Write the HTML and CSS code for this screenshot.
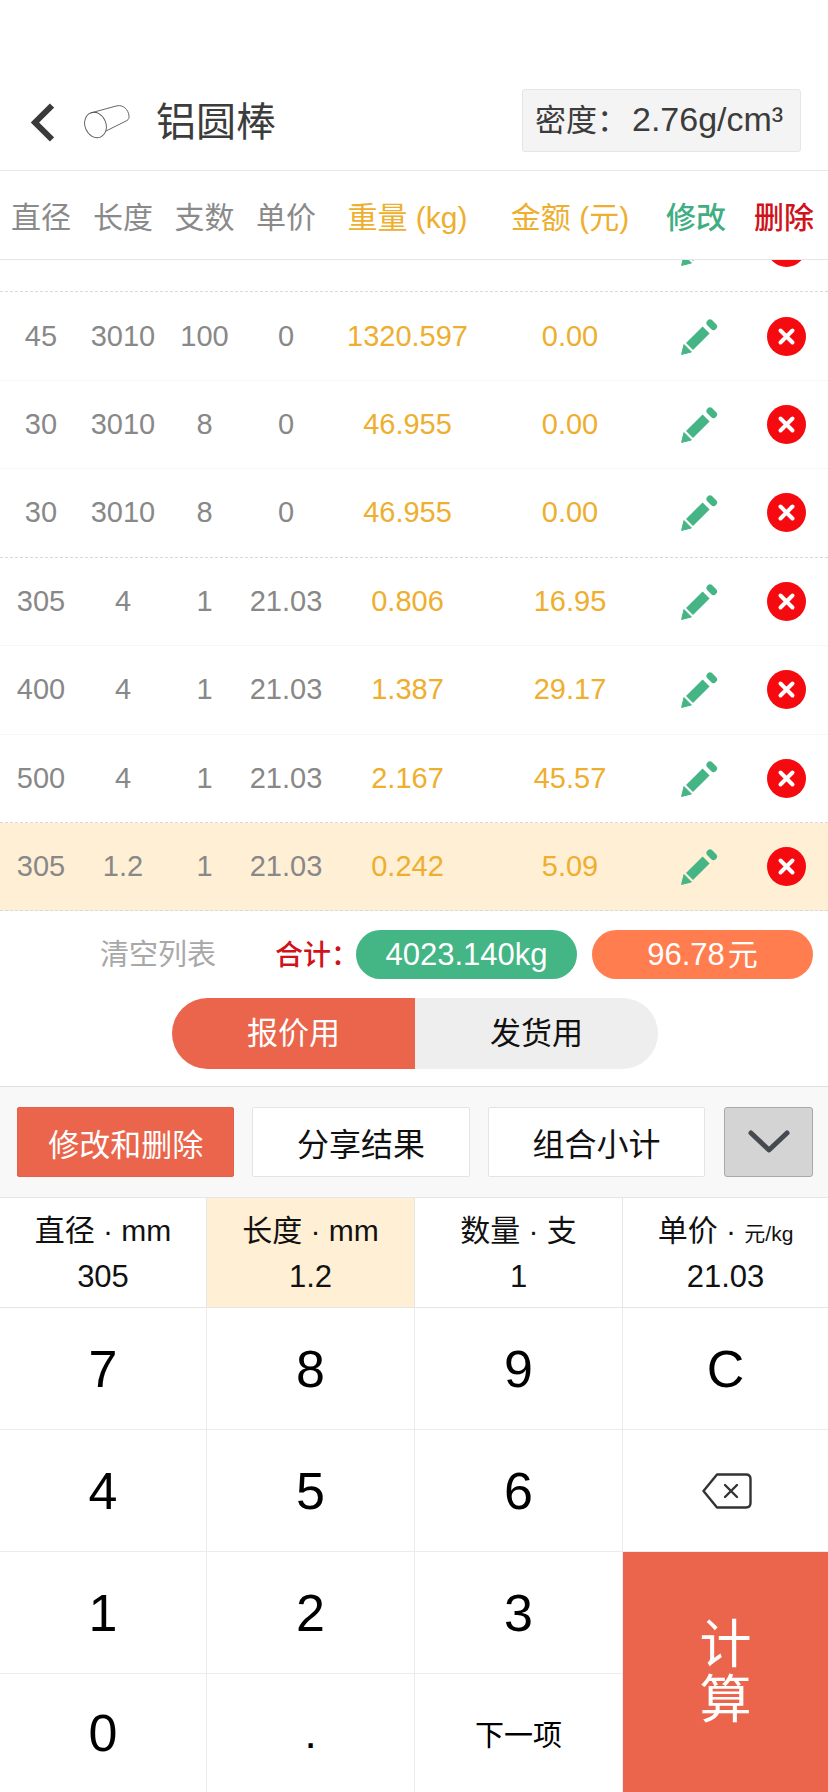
FILE: index.html
```html
<!DOCTYPE html>
<html lang="zh-CN">
<head>
<meta charset="utf-8">
<title>铝圆棒</title>
<link rel="stylesheet" href="styles.css">
</head>
<body>
<svg class="defs" width="0" height="0" aria-hidden="true">
  <defs>
    <symbol id="pencil" viewBox="0 0 37 37">
      <path d="M0.6 36.4 L3 26.6 L10.4 34 Z" fill="#46b586" stroke="#46b586" stroke-width="1" stroke-linejoin="round"/>
      <path d="M5 25 L21.6 8.4 L28.6 15.4 L12 32 Z" fill="#46b586"/>
      <path d="M29 5 L32.5 8.5" stroke="#46b586" stroke-width="7" stroke-linecap="round"/>
    </symbol>
    <symbol id="del" viewBox="0 0 39 39">
      <circle cx="19.5" cy="19.5" r="19.5" fill="#f40a0f"/>
      <path d="M13.5 13.5 L25.5 25.5 M25.5 13.5 L13.5 25.5" stroke="#fff" stroke-width="4" stroke-linecap="round"/>
    </symbol>
  </defs>
</svg>

<header class="topbar">
  <svg class="back" viewBox="0 0 23 39"><path d="M21 2.5 L4 19.5 L21 36.5" fill="none" stroke="#3a3a3a" stroke-width="6"/></svg>
  <svg class="rod" viewBox="0 0 46 34"><g fill="none" stroke="#555" stroke-width="0.9"><ellipse cx="11.5" cy="20" rx="10.5" ry="13" transform="rotate(-22 11.5 20)"/><path d="M6.5 8 L33 0.8 C39.5 -0.5 44.5 5 45 11 C45.3 13 44.5 14.5 43 15.5 L22 26"/></g></svg>
  <h1 class="title">铝圆棒</h1>
  <div class="density">密度：<span class="density-value">2.76g/cm³</span></div>
</header>

<div class="thead grid-row">
  <span>直径</span><span>长度</span><span>支数</span><span>单价</span>
  <span class="gold">重量 (kg)</span><span class="gold">金额 (元)</span>
  <span class="green-h">修改</span><span class="red-h">删除</span>
</div>

<div class="list">
  <div class="list-inner">
    <div class="row grid-row dash"><span></span><span></span><span></span><span></span><span></span><span></span><svg class="ic-pen"><use href="#pencil"/></svg><svg class="ic-del"><use href="#del"/></svg></div>
    <div class="row grid-row"><span>45</span><span>3010</span><span>100</span><span>0</span><span class="gold">1320.597</span><span class="gold">0.00</span><svg class="ic-pen"><use href="#pencil"/></svg><svg class="ic-del"><use href="#del"/></svg></div>
    <div class="row grid-row"><span>30</span><span>3010</span><span>8</span><span>0</span><span class="gold">46.955</span><span class="gold">0.00</span><svg class="ic-pen"><use href="#pencil"/></svg><svg class="ic-del"><use href="#del"/></svg></div>
    <div class="row grid-row dash"><span>30</span><span>3010</span><span>8</span><span>0</span><span class="gold">46.955</span><span class="gold">0.00</span><svg class="ic-pen"><use href="#pencil"/></svg><svg class="ic-del"><use href="#del"/></svg></div>
    <div class="row grid-row"><span>305</span><span>4</span><span>1</span><span>21.03</span><span class="gold">0.806</span><span class="gold">16.95</span><svg class="ic-pen"><use href="#pencil"/></svg><svg class="ic-del"><use href="#del"/></svg></div>
    <div class="row grid-row"><span>400</span><span>4</span><span>1</span><span>21.03</span><span class="gold">1.387</span><span class="gold">29.17</span><svg class="ic-pen"><use href="#pencil"/></svg><svg class="ic-del"><use href="#del"/></svg></div>
    <div class="row grid-row dash"><span>500</span><span>4</span><span>1</span><span>21.03</span><span class="gold">2.167</span><span class="gold">45.57</span><svg class="ic-pen"><use href="#pencil"/></svg><svg class="ic-del"><use href="#del"/></svg></div>
    <div class="row grid-row dash active"><span>305</span><span>1.2</span><span>1</span><span>21.03</span><span class="gold">0.242</span><span class="gold">5.09</span><svg class="ic-pen"><use href="#pencil"/></svg><svg class="ic-del"><use href="#del"/></svg></div>
  </div>
</div>

<div class="summary">
  <span class="clear">清空列表</span>
  <span class="total">合计：</span>
  <span class="pill pill-green">4023.140kg</span>
  <span class="pill pill-orange">96.78<span class="unit">元</span></span>
</div>

<div class="toggle">
  <span class="toggle-on">报价用</span>
  <span class="toggle-off">发货用</span>
</div>

<div class="toolbar">
  <button class="tbtn tbtn-on">修改和删除</button>
  <button class="tbtn">分享结果</button>
  <button class="tbtn">组合小计</button>
  <button class="tbtn-down"><svg viewBox="0 0 42 24" class="down"><path d="M3 3 L21 20 L39 3" fill="none" stroke="#454a50" stroke-width="5" stroke-linecap="round" stroke-linejoin="round"/></svg></button>
</div>

<div class="keypad">
  <div class="field"><div>直径 · mm</div><div class="val">305</div></div>
  <div class="field field-on"><div>长度 · mm</div><div class="val">1.2</div></div>
  <div class="field"><div>数量 · 支</div><div class="val">1</div></div>
  <div class="field field-last"><div>单价 · <small>元/kg</small></div><div class="val">21.03</div></div>
  <div class="key">7</div><div class="key">8</div><div class="key">9</div><div class="key key-last">C</div>
  <div class="key">4</div><div class="key">5</div><div class="key">6</div>
  <div class="key key-last"><svg class="bksp" viewBox="0 0 50 36"><g fill="none" stroke="#333" stroke-width="2.4" stroke-linejoin="round"><path d="M15 1.5 H44 Q48.5 1.5 48.5 6 V30 Q48.5 34.5 44 34.5 H15 L1.5 18 Z"/><path d="M23 12 L35 24 M35 12 L23 24" stroke-linecap="round"/></g></svg></div>
  <div class="key">1</div><div class="key">2</div><div class="key">3</div>
  <div class="calc"><span>计</span><span>算</span></div>
  <div class="key">0</div><div class="key key-dot">.</div><div class="key key-text">下一项</div>
</div>
</body>
</html>
```
FILE: styles.css
```css
* { box-sizing: border-box; }
html, body { margin: 0; padding: 0; }
body {
  width: 828px;
  height: 1792px;
  overflow: hidden;
  background: #fff;
  font-family: "Liberation Sans", "Noto Sans CJK SC", sans-serif;
  display: flex;
  flex-direction: column;
}
.defs { position: absolute; }

.topbar {
  height: 171px;
  flex: none;
  display: flex;
  align-items: flex-start;
  padding: 103px 27px 0 31px;
  border-bottom: 1px solid #e8e8e8;
}
.back { width: 23px; height: 39px; flex: none; }
.rod { width: 46px; height: 34px; flex: none; margin: 2px 0 0 30px; }
.title { margin: -5px 0 0 26px; font-size: 40px; line-height: 48px; font-weight: 400; color: #3c3c3c; }
.density {
  margin: -14px 0 0 auto;
  width: 279px;
  height: 63px;
  background: #f4f4f4;
  border: 1px solid #e6e6e6;
  border-radius: 3px;
  font-size: 31px;
  line-height: 59px;
  padding-left: 12px;
  color: #3c3c3c;
  white-space: nowrap;
}
.density-value { font-size: 34px; margin-left: 4px; }

.grid-row {
  display: grid;
  grid-template-columns: 82px 82px 81px 82px 161px 164px 88px 88px;
  align-items: center;
  justify-items: center;
  text-align: center;
}
.thead {
  height: 89px;
  flex: none;
  border-bottom: 1px solid #e6e6e6;
  font-size: 30px;
  color: #8a8a8a;
  position: relative;
  z-index: 1;
  background: #fff;
}
.gold { color: #eeae2e; }
.green-h { color: #3fae82; font-weight: 500; }
.red-h { color: #d0121b; font-weight: 500; }

.list { height: 651px; flex: none; overflow: hidden; }
.list-inner { margin-top: -56px; }
.row {
  height: 88.43px;
  font-size: 29px;
  color: #888;
  border-bottom: 1px solid #f7f7f7;
}
.row.dash { border-bottom: 1px dashed #d9d9d9; }
.active { background: #ffefd5; }
.ic-pen { width: 37px; height: 37px; margin-left: 6px; }
.ic-del { width: 39px; height: 39px; margin-left: 4px; }

.summary {
  flex: none;
  display: flex;
  align-items: center;
  padding: 19px 15px 0 0;
  justify-content: flex-end;
  font-size: 29px;
}
.clear { color: #a8a8a8; margin-right: 59px; line-height: 44px; }
.total { color: #d0121b; font-weight: 500; width: 81px; white-space: nowrap; font-size: 28px; margin-top: -4px; }
.pill {
  width: 221px;
  height: 49px;
  border-radius: 25px;
  color: #fff;
  font-size: 31px;
  line-height: 49px;
  text-align: center;
}
.unit { margin-left: 3px; font-size: 30px; }
.pill-green { background: #44b585; }
.pill-orange { background: #ff7d4f; margin-left: 15px; }

.toggle {
  flex: none;
  width: 486px;
  height: 71px;
  margin: 19px 0 17px 172px;
  display: flex;
  border-radius: 36px;
  overflow: hidden;
  font-size: 31px;
  line-height: 71px;
  text-align: center;
}
.toggle-on { width: 243px; background: #ea654b; color: #fff; }
.toggle-off { width: 243px; background: #eeeeee; color: #111; }

.toolbar {
  flex: none;
  height: 111px;
  background: #f8f8f8;
  border-top: 1px solid #dedede;
  display: flex;
  align-items: flex-start;
  padding: 20px 15px 0 17px;
  gap: 18px;
}
.tbtn {
  width: 218px;
  height: 70px;
  padding: 0;
  background: #fff;
  border: 1px solid #e4e4e4;
  border-radius: 2px;
  font: inherit;
  font-size: 32px;
  color: #111;
}
.tbtn-on { background: #ea654b; border-color: #e0624a; color: #fff; font-size: 31px; }
.tbtn-down {
  width: 89px;
  height: 70px;
  padding: 0;
  margin-left: 1px;
  background: #d4d4d4;
  border: 1px solid #a9a9a9;
  border-radius: 3px;
  display: flex;
  align-items: center;
  justify-content: center;
}
.down { width: 42px; height: 24px; }

.keypad {
  flex: none;
  display: grid;
  grid-template-columns: 207px 208px 208px 205px;
  grid-template-rows: 110px 122px 122px 122px 119px;
  border-top: 1px solid #e6e6e6;
  height: 595px;
}
.field {
  border-right: 1px solid #e6e6e6;
  border-bottom: 1px solid #e6e6e6;
  text-align: center;
  font-size: 30px;
  line-height: 46px;
  padding-top: 10px;
  color: #111;
}
.field small { font-size: 21px; line-height: 1; }
.val { font-size: 31px; }
.field-on { background: #ffefd5; }
.field-last { border-right: 0; }
.key {
  border-right: 1px solid #ececec;
  border-bottom: 1px solid #ececec;
  display: flex;
  align-items: center;
  justify-content: center;
  font-size: 52px;
  color: #000;
}
.key-last { border-right: 0; }
.key-text { font-size: 29px; }
.key-dot { font-size: 44px; }
.bksp { width: 50px; height: 36px; margin-left: 2px; }
.calc {
  grid-column: 4;
  grid-row: 4 / span 2;
  background: #ea654b;
  color: #fff;
  font-size: 52px;
  line-height: 55px;
  display: flex;
  flex-direction: column;
  align-items: center;
  justify-content: center;
}
```
